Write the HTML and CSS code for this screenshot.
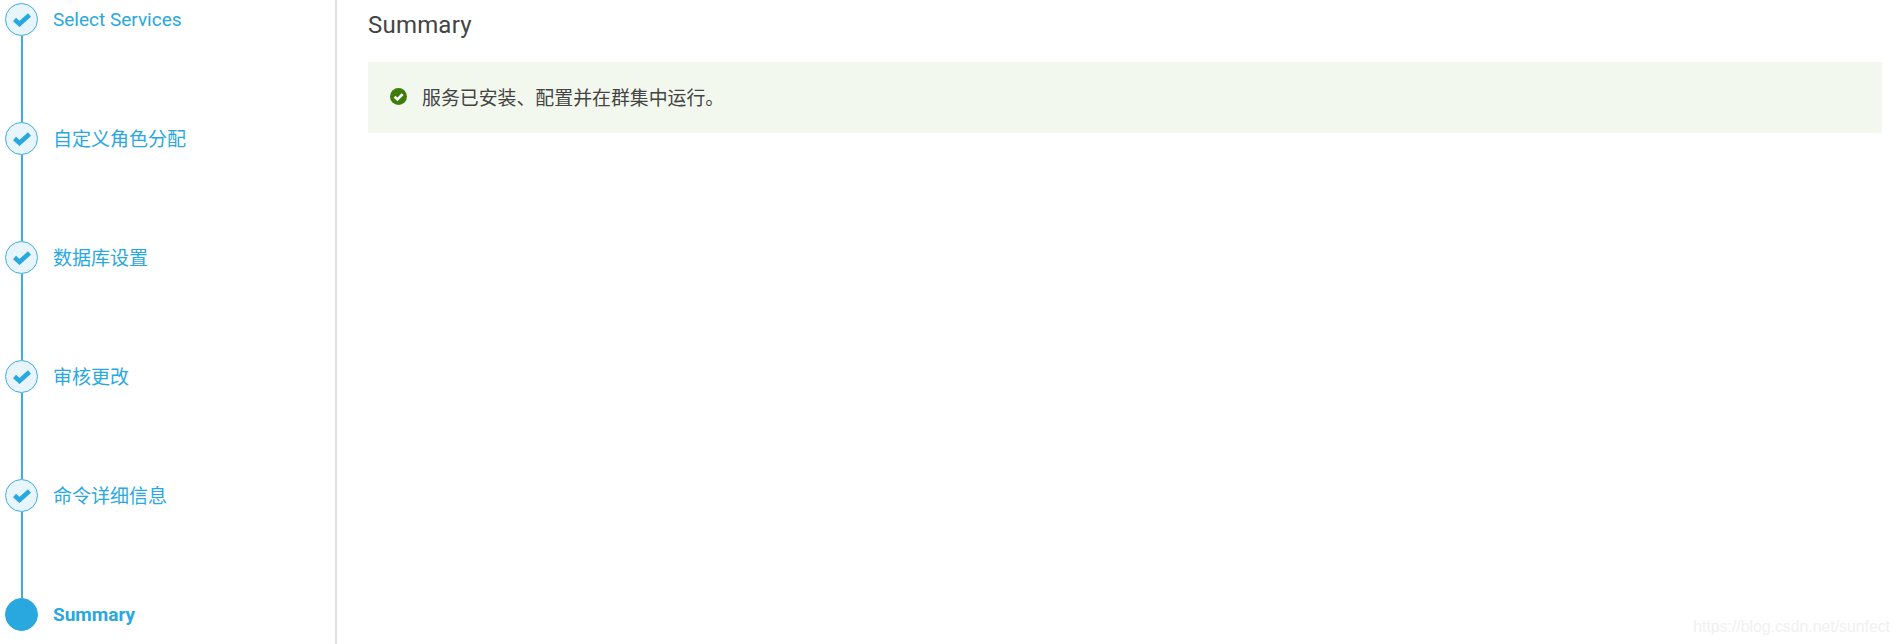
FILE: index.html

```html
<!DOCTYPE html>
<html lang="zh">
<head>
    <meta charset="UTF-8">
    <title>Summary</title>
    <link rel="stylesheet" href="styles.css">
</head>
<body>
    <div class="wizard">
        <div class="steps">
            <div class="step">
                <div class="rail">
                    <div class="dot"><svg class="check" viewBox="0 0 18 14"><path d="M1.5 6.5 L6.5 11 L16.5 2"/></svg></div>
                    <div class="line"></div>
                </div>
                <div class="step-label">Select Services</div>
            </div>
            <div class="step">
                <div class="rail">
                    <div class="dot"><svg class="check" viewBox="0 0 18 14"><path d="M1.5 6.5 L6.5 11 L16.5 2"/></svg></div>
                    <div class="line"></div>
                </div>
                <div class="step-label cjk">自定义角色分配</div>
            </div>
            <div class="step">
                <div class="rail">
                    <div class="dot"><svg class="check" viewBox="0 0 18 14"><path d="M1.5 6.5 L6.5 11 L16.5 2"/></svg></div>
                    <div class="line"></div>
                </div>
                <div class="step-label cjk">数据库设置</div>
            </div>
            <div class="step">
                <div class="rail">
                    <div class="dot"><svg class="check" viewBox="0 0 18 14"><path d="M1.5 6.5 L6.5 11 L16.5 2"/></svg></div>
                    <div class="line"></div>
                </div>
                <div class="step-label cjk">审核更改</div>
            </div>
            <div class="step">
                <div class="rail">
                    <div class="dot"><svg class="check" viewBox="0 0 18 14"><path d="M1.5 6.5 L6.5 11 L16.5 2"/></svg></div>
                    <div class="line"></div>
                </div>
                <div class="step-label cjk">命令详细信息</div>
            </div>
            <div class="step current">
                <div class="rail">
                    <div class="dot"></div>
                </div>
                <div class="step-label">Summary</div>
            </div>
        </div>

        <div class="content">
            <h2>Summary</h2>
            <div class="alert">
                <svg class="alert-icon" viewBox="0 0 16 16">
                    <circle cx="8" cy="8" r="8"/>
                    <path d="M4.3 8.2 L7 10.8 L11.8 5.8"/>
                </svg>
                <span>服务已安装、配置并在群集中运行。</span>
            </div>
        </div>
    </div>
    <div class="watermark">https://blog.csdn.net/sunfect</div>
</body>
</html>
```

FILE: styles.css

```css
* {
    margin: 0;
    padding: 0;
    box-sizing: border-box;
}

html, body {
    height: 100%;
    overflow: hidden;
}

body {
    font-family: Roboto, "Noto Sans CJK SC", sans-serif;
    background-color: #fff;
    color: #444;
    position: relative;
}

.wizard {
    display: flex;
    height: 100%;
}

.steps {
    width: 337px;
    flex-shrink: 0;
    border-right: 2px solid #dedede;
    padding: 3px 0 0 5px;
}

.step {
    display: flex;
    height: 119px;
    gap: 15px;
}

.step.current {
    height: auto;
}

.rail {
    width: 33px;
    display: flex;
    flex-direction: column;
    align-items: center;
}

.dot {
    width: 33px;
    height: 33px;
    flex-shrink: 0;
    border: 1.5px solid #3aaee2;
    border-radius: 50%;
    background-color: #e8f5fc;
    display: flex;
    align-items: center;
    justify-content: center;
}

.check {
    width: 18px;
    height: 14px;
    fill: none;
    stroke: #29a8e0;
    stroke-width: 4.6;
}

.line {
    width: 2px;
    flex: 1;
    background-color: #3aaee2;
}

.step-label {
    font-size: 19px;
    line-height: 34px;
    color: #29a8e0;
}

.step-label.cjk {
    padding-top: 1px;
}

.current .dot {
    background-color: #29a8e0;
    border-color: #29a8e0;
}

.current .step-label {
    font-weight: 700;
}

.content {
    flex: 1;
    padding: 0 17px 0 31px;
}

.content h2 {
    font-size: 24px;
    font-weight: 400;
    letter-spacing: 0.2px;
    line-height: 50px;
    margin-bottom: 12px;
}

.alert {
    height: 71px;
    padding-left: 22px;
    background-color: #f3f8ee;
    display: flex;
    align-items: center;
    gap: 15px;
    font-size: 18.9px;
}

.alert span {
    padding-bottom: 3px;
}

.alert-icon {
    width: 17px;
    height: 17px;
    margin-top: -3px;
    flex-shrink: 0;
}

.alert-icon circle {
    fill: #3f7d0a;
}

.alert-icon path {
    fill: none;
    stroke: #fff;
    stroke-width: 2.4;
}

.watermark {
    position: absolute;
    right: 9px;
    bottom: 8px;
    font-family: "Liberation Sans", sans-serif;
    font-size: 15.8px;
    color: #f0f0f0;
}
```
